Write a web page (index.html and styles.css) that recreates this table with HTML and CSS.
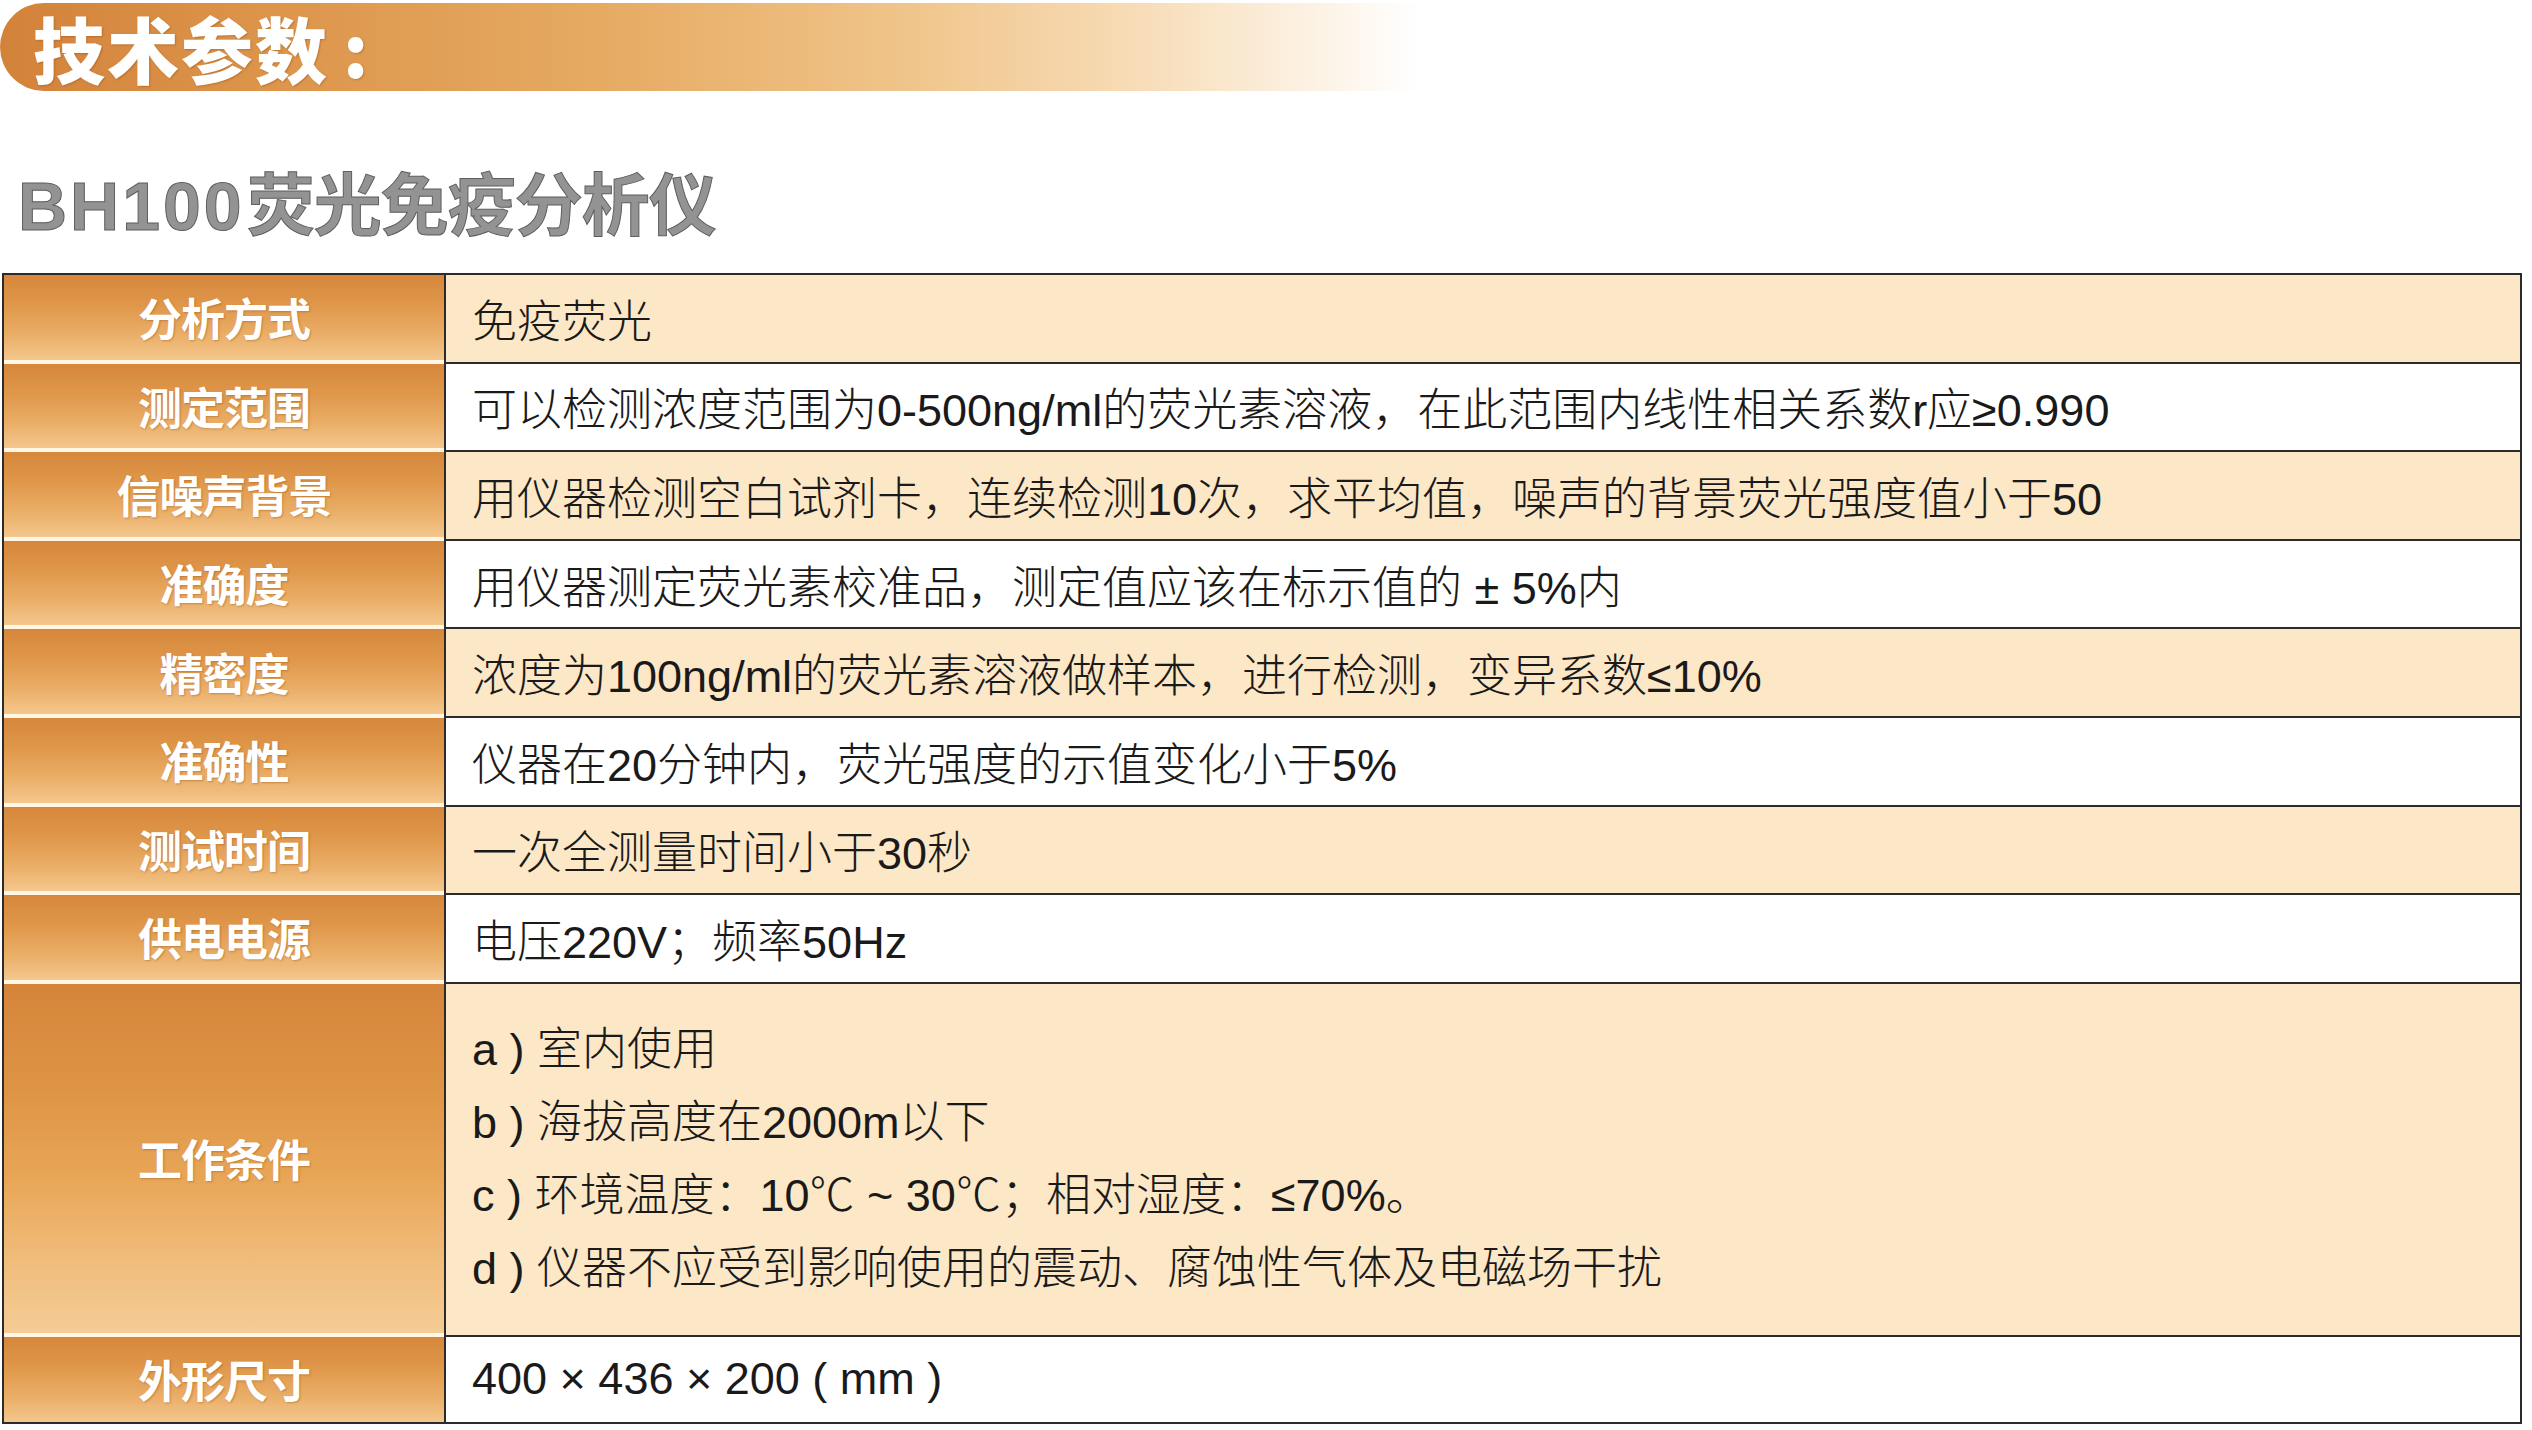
FILE: index.html
```html
<!DOCTYPE html>
<html lang="zh-CN">
<head>
<meta charset="utf-8">
<title>技术参数</title>
<link rel="stylesheet" href="styles.css">
</head>
<body>
<div class="page">
  <div class="banner"><span class="banner-title">技术参数<span class="colon">:</span></span></div>
  <h1 class="product"><span class="model">BH100</span>荧光免疫分析仪</h1>
  <div class="spec">
    <div class="row cream"><div class="label">分析方式</div><div class="value">免疫荧光</div></div>
    <div class="row"><div class="label">测定范围</div><div class="value">可以检测浓度范围为0-500ng/ml的荧光素溶液，在此范围内线性相关系数r应≥0.990</div></div>
    <div class="row cream"><div class="label">信噪声背景</div><div class="value">用仪器检测空白试剂卡，连续检测10次，求平均值，噪声的背景荧光强度值小于50</div></div>
    <div class="row"><div class="label">准确度</div><div class="value">用仪器测定荧光素校准品，测定值应该在标示值的 ± 5%内</div></div>
    <div class="row cream"><div class="label">精密度</div><div class="value">浓度为100ng/ml的荧光素溶液做样本，进行检测，变异系数≤10%</div></div>
    <div class="row"><div class="label">准确性</div><div class="value">仪器在20分钟内，荧光强度的示值变化小于5%</div></div>
    <div class="row cream"><div class="label">测试时间</div><div class="value">一次全测量时间小于30秒</div></div>
    <div class="row"><div class="label">供电电源</div><div class="value">电压220V；频率50Hz</div></div>
    <div class="row cream tall"><div class="label">工作条件</div><div class="value list">
      <div class="item">a ) 室内使用</div>
      <div class="item">b ) 海拔高度在2000m以下</div>
      <div class="item">c ) 环境温度：10℃ ~ 30℃；相对湿度：≤70%。</div>
      <div class="item">d ) 仪器不应受到影响使用的震动、腐蚀性气体及电磁场干扰</div>
    </div></div>
    <div class="row last"><div class="label">外形尺寸</div><div class="value">400 × 436 × 200 ( mm )</div></div>
  </div>
</div>
</body>
</html>
```

FILE: styles.css
```css
html, body {
  margin: 0;
  padding: 0;
  background: #ffffff;
}

.page {
  width: 2532px;
  height: 1430px;
  overflow: hidden;
  font-family: "Liberation Sans", "Noto Sans CJK SC", sans-serif;
}

.banner {
  margin-top: 3px;
  width: 1420px;
  height: 88px;
  border-radius: 44px 0 0 44px / 44px 0 0 44px;
  background: linear-gradient(to right, #d3823a 0%, #dc944a 18%, #e6aa62 42%, #efc286 62%, #f7dcb6 80%, rgba(255, 255, 255, 0) 100%);
  display: flex;
  align-items: center;
  padding-left: 33px;
  box-sizing: border-box;
}

.banner-title {
  font-family: "Noto Sans CJK SC", sans-serif;
  font-weight: 900;
  font-size: 72px;
  line-height: 1;
  color: #ffffff;
  letter-spacing: 2px;
  text-shadow: 1px 1px 2px rgba(130, 60, 0, 0.35);
}

.colon {
  margin-left: 14px;
}

.product {
  margin: 75px 0 27px 18px;
  height: 80px;
  font-family: "Liberation Sans", "Noto Sans CJK SC", sans-serif;
  font-size: 68px;
  line-height: 80px;
  font-weight: 700;
  color: #939393;
  -webkit-text-stroke: 1px #5e5e5e;
  letter-spacing: -1px;
}

.model {
  letter-spacing: 3px;
  margin-right: 2px;
}

.spec {
  margin-left: 2px;
  width: 2520px;
  border: 2px solid #2b2b2b;
  box-sizing: border-box;
  display: flex;
  flex-direction: column;
}

.row {
  display: grid;
  grid-template-columns: 440px 1fr;
  height: 88.6px;
  background: #ffffff;
}

.row.cream .value {
  background: #fce7c7;
}

.row.tall {
  height: 353px;
}

.row.last {
  height: 85.2px;
}

.label {
  display: flex;
  align-items: center;
  justify-content: center;
  box-sizing: border-box;
  border-bottom: 4px solid #fff6e4;
  background: linear-gradient(to bottom, #d6873b 0%, #df974a 35%, #eaae67 70%, #f4c78d 100%);
  font-family: "Noto Sans CJK SC", sans-serif;
  font-weight: 700;
  font-size: 44px;
  color: #ffffff;
  letter-spacing: -1px;
  text-shadow: 1px 1px 2px rgba(130, 60, 0, 0.35);
}

.row.tall .label {
  background: linear-gradient(to bottom, #d5853a 0%, #de9445 30%, #e8a556 55%, #f0bd7c 80%, #f5cc96 100%);
}

.value {
  display: flex;
  align-items: center;
  box-sizing: border-box;
  border-left: 2px solid #2b2b2b;
  border-bottom: 2px solid #2b2b2b;
  padding-left: 26px;
  font-size: 45px;
  font-weight: 300;
  color: #1a1a1a;
  white-space: pre;
}

.row.last .label,
.row.last .value {
  border-bottom: none;
}

.value.list {
  flex-direction: column;
  align-items: flex-start;
  justify-content: center;
}

.item {
  line-height: 73px;
}
```
